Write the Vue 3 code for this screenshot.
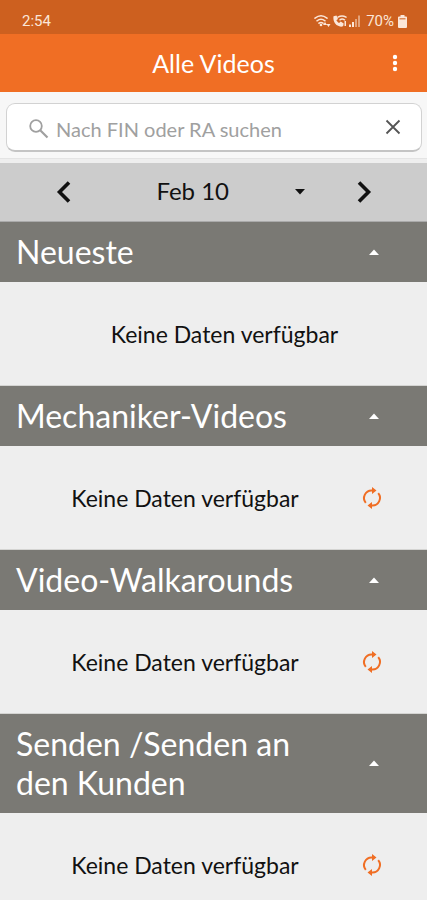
<script setup>
import { ref } from 'vue'

const query = ref('')
const sections = ref([
  { id: 'latest', title: 'Neueste', reload: false, open: true },
  { id: 'mechanic', title: 'Mechaniker-Videos', reload: true, open: true },
  { id: 'walkaround', title: 'Video-Walkarounds', reload: true, open: true },
  { id: 'send', title: 'Senden /Senden an den Kunden', reload: true, open: true },
])
</script>

<template>
  <div class="screen">
    <div class="status">
      <span>2:54</span>
      <div class="status-right">
        <svg class="status-icons" width="48" height="14" viewBox="0 0 48 14" aria-hidden="true">
          <g fill="none" stroke="currentColor" stroke-width="1.5" stroke-linecap="round">
            <path d="M1 4.200Q7 -0.500 13 4.200M3 6.800Q7 3.600 11 6.800M5 9.200Q7 7.600 9 9.200" />
            <path d="M24 3.200Q28 0.800 32 3.200M26 5.800Q28 4.400 30.500 5.800" />
          </g>
          <g fill="currentColor">
            <circle cx="7" cy="11" r="1.300" />
            <path d="M11 8l2 3H9zM14.500 13l-2-3h4z" />
            <path d="M19.500 2.200l3-.6 1.500 3.400-1.600 1.300c.6 1.300 1.400 2 2.700 2.700l1.600-1.400 3 1.800-.5 2.600c-1.400 1-3.600.8-5.600-.4-3-1.800-4.700-5.300-4.100-9.400zM30.500 7h1.500v5h-1.500z" />
            <path d="M35 10.500h2V13h-2zM38 8h2v5h-2z" />
            <path d="M41 5h2v8h-2zM44 1.500h2V13h-2z" opacity=".5" />
          </g>
        </svg>
        <span>70%</span>
        <svg width="9" height="13" viewBox="0 0 9 13" aria-hidden="true">
          <path d="M2.500 0h4v1.500H8q1 0 1 1V12q0 1-1 1H1q-1 0-1-1V2.500q0-1 1-1h1.500z" fill="currentColor" />
          <path d="M1.500 3h6v1.500h-6z" fill="#dd8a56" />
        </svg>
      </div>
    </div>

    <header class="appbar">
      <h1>Alle Videos</h1>
      <button class="more" type="button" aria-label="Menü">
        <svg width="24" height="24" viewBox="0 0 24 24" fill="currentColor">
          <circle cx="12" cy="6" r="2.200" /><circle cx="12" cy="12" r="2.200" /><circle cx="12" cy="18" r="2.200" />
        </svg>
      </button>
    </header>

    <div class="search-wrap">
      <div class="search">
        <label for="search" aria-label="Suche">
          <svg width="20" height="20" viewBox="0 0 20 20" fill="none" stroke="currentColor">
            <circle cx="7" cy="7" r="5.800" stroke-width="1.800" />
            <path d="M11.200 11.200L18.500 18.500" stroke-width="2.200" />
          </svg>
        </label>
        <input id="search" v-model="query" type="text" placeholder="Nach FIN oder RA suchen">
        <button type="button" aria-label="Löschen" @click="query = ''">
          <svg width="16" height="16" viewBox="0 0 16 16" fill="none" stroke="currentColor" stroke-width="1.800">
            <path d="M1.500 1.500l13 13M14.500 1.500l-13 13" />
          </svg>
        </button>
      </div>
    </div>

    <div class="datebar">
      <button class="step" type="button" aria-label="Zurück">
        <svg width="24" height="24" viewBox="0 0 24 24" fill="none" stroke="currentColor" stroke-width="3.600">
          <path d="M18 2.500L8.500 12l9.500 9.500" />
        </svg>
      </button>
      <button class="date" type="button">
        <span>Feb 10</span>
        <svg width="12" height="6" viewBox="0 0 12 6" fill="currentColor"><path d="M1 0h10L6 5.500z" /></svg>
      </button>
      <button class="step" type="button" aria-label="Weiter">
        <svg width="24" height="24" viewBox="0 0 24 24" fill="none" stroke="currentColor" stroke-width="3.600">
          <path d="M7 2.500l9.500 9.500L7 21.500" />
        </svg>
      </button>
    </div>

    <main>
      <section v-for="s in sections" :key="s.id">
        <h2>
          <button class="heading" type="button" :aria-expanded="s.open" @click="s.open = !s.open">
            <span>{{ s.title }}</span>
            <svg :class="{ closed: !s.open }" width="12" height="6" viewBox="0 0 12 6" fill="currentColor">
              <path d="M1 6h10L6 .5z" />
            </svg>
          </button>
        </h2>
        <div v-if="s.open" class="body" :class="{ reloadable: s.reload }">
          <p>Keine Daten verfügbar</p>
          <button v-if="s.reload" class="reload" type="button" aria-label="Neu laden">
            <svg width="24" height="24" viewBox="0 0 24 24">
              <g fill="none" stroke="currentColor" stroke-width="2">
                <path d="M13 4.500h-1A7.500 7.500 0 0 0 5.800 16.800" />
                <path d="M11 19.500h1A7.500 7.500 0 0 0 18.200 7.200" />
              </g>
              <path d="M12 1v7l4.500-3.500zM12 23v-7l-4.500 3.500z" fill="currentColor" />
            </svg>
          </button>
        </div>
      </section>
    </main>
  </div>
</template>

<style>
body {
  margin: 0;
  background: #eee;
}
html {
  scrollbar-width: none;
}
</style>

<style scoped>
.screen {
  height: 100vh;
  overflow: hidden;
  background: #eee;
  color: #111;
  font-family: Lato, "Liberation Sans", sans-serif;
}
button {
  display: flex;
  align-items: center;
  justify-content: center;
  margin: 0;
  padding: 0;
  border: 0;
  background: none;
  color: inherit;
  font: inherit;
}
svg {
  display: block;
  flex: none;
}
.status {
  display: flex;
  align-items: center;
  justify-content: space-between;
  box-sizing: border-box;
  height: 34px;
  padding: 8px 20px 0 22px;
  background: #cd601f;
  color: #fbe6d8;
  font: 15px/20px Roboto, sans-serif;
}
.status-right {
  display: flex;
  align-items: center;
  gap: 4px;
}
.appbar {
  display: grid;
  grid-template-columns: 48px 1fr 48px;
  align-items: center;
  height: 58px;
  padding: 0 8px;
  background: #f06e24;
  color: #fff;
}
.appbar h1 {
  grid-column: 2;
  margin: 0;
  font-size: 25px;
  font-weight: 400;
  text-align: center;
}
.more {
  height: 48px;
}
.search-wrap {
  padding: 11px 5px 6px 6px;
  border-bottom: 1px solid #e4e4e4;
  background: #f7f7f7;
}
.search {
  display: flex;
  align-items: center;
  height: 46px;
  padding: 0 8px 0 22px;
  border: 1px solid #d2d2d2;
  border-bottom: 2px solid #c4c4c4;
  border-radius: 9px;
  background: #fff;
  color: #a0a0a0;
}
.search label {
  padding-top: 3px;
}
.search input {
  flex: 1;
  min-width: 0;
  padding: 4px 0 0 7px;
  border: 0;
  outline: 0;
  background: none;
  color: #333;
  font: 20px/26px Lato, sans-serif;
}
.search input::placeholder {
  color: #a0a0a0;
  opacity: 1;
}
.search button {
  width: 40px;
  height: 44px;
  color: #555;
}
.datebar {
  display: flex;
  justify-content: space-between;
  height: 58px;
  margin-top: 4px;
  padding: 0 39px;
  border-bottom: 1px solid #aaa;
  box-sizing: border-box;
  min-height: 59px;
  background: #ccc;
}
.step {
  width: 48px;
}
.date {
  flex: 1;
  justify-content: flex-end;
  gap: 65px;
  padding-right: 34px;
  font-size: 24px;
}
.date span {
  line-height: 28px;
  padding-bottom: 2px;
}
.heading {
  justify-content: space-between;
  box-sizing: border-box;
  width: 100%;
  padding: 10px 47px 11px 16px;
  background: #7a7974;
  color: #fff;
  font-size: 32px;
  font-weight: 400;
  line-height: 39px;
  text-align: left;
}
h2 {
  margin: 0;
}
.heading span {
  flex: 1;
  padding-right: 40px;
}
.closed {
  transform: rotate(180deg);
}
.body {
  display: flex;
  align-items: center;
  height: 104px;
  padding-left: 22px;
  border-bottom: 1px solid #d4d4d2;
  box-sizing: border-box;
}
.reloadable {
  padding-right: 31px;
}
.body p {
  flex: 1;
  margin: 0;
  font-size: 23px;
  line-height: 32px;
  text-align: center;
}
.reload {
  width: 48px;
  height: 48px;
  color: #f06e24;
}
</style>
